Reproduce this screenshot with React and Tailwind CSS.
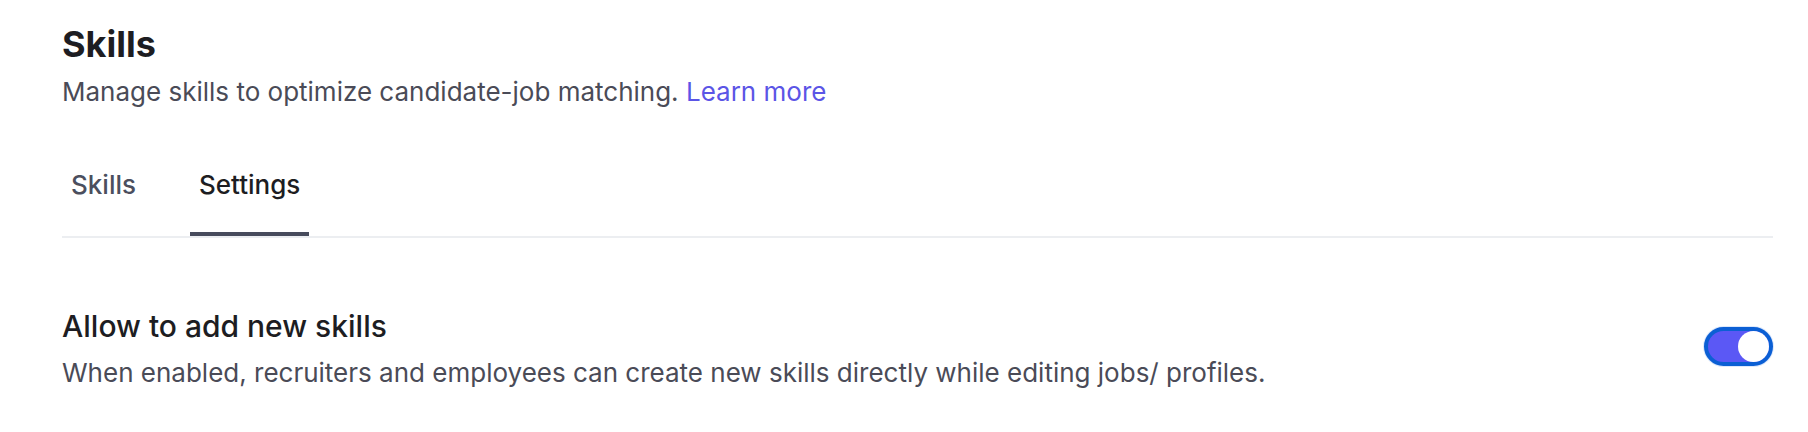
import React, { useState } from 'react';

const font = { fontFamily: 'Inter, "Noto Sans", sans-serif' };

const App = () => {
  const [tab, setTab] = useState('settings');
  const [allowNew, setAllowNew] = useState(true);

  return (
    <div className="min-h-screen bg-white pl-[62px] pr-[35px] pt-[22px]" style={font}>
      {/* Header */}
      <h1 className="text-[36px] leading-[44px] font-bold text-[#1d1d22]">Skills</h1>
      <p className="mt-[9px] text-[26px] leading-[34px] text-[#4a4b57]">
        Manage skills to optimize candidate-job matching.{' '}
        <a href="#" className="text-[#5b55e6]">Learn more</a>
      </p>

      {/* Tabs */}
      <div className="mt-[33px] flex border-b-2 border-[#eceef1]">
        {[
          { id: 'skills', label: 'Skills' },
          { id: 'settings', label: 'Settings' },
        ].map((t, i) => (
          <button
            key={t.id}
            onClick={() => setTab(t.id)}
            className={`px-[9px] pt-[26px] pb-[30px] border-b-4 text-[26px] leading-[34px] font-medium ${
              i > 0 ? 'ml-[45px]' : ''
            } ${
              tab === t.id
                ? 'border-[#474b5c] text-[#1d1d22]'
                : 'border-transparent text-[#4b4f5e]'
            }`}
          >
            {t.label}
          </button>
        ))}
      </div>

      {/* Setting row */}
      <div className="mt-[69px] flex items-start justify-between">
        <div>
          <h2 className="text-[30px] leading-[38px] font-medium text-[#1d1d22]">
            Allow to add new skills
          </h2>
          <p className="mt-[11px] text-[26px] leading-[34px] text-[#4a4b57]">
            When enabled, recruiters and employees can create new skills directly while editing jobs/ profiles.
          </p>
        </div>
        <button
          onClick={() => setAllowNew(!allowNew)}
          className={`mt-[20px] flex h-[39px] w-[69px] items-center rounded-full border-4 border-[#0b5fd4] ring-1 ring-[#dde8fb] ${
            allowNew ? 'justify-end bg-[#5b58f5]' : 'justify-start bg-gray-300'
          }`}
        >
          <span className="h-[31px] w-[31px] rounded-full bg-white" />
        </button>
      </div>
    </div>
  );
};

export default App;
